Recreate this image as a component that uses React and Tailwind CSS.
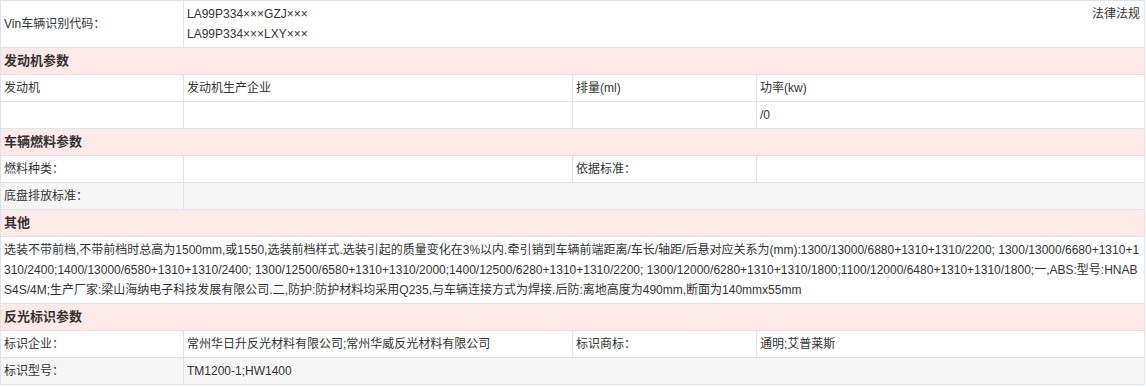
import React from "react";

const font = { fontFamily: '"Liberation Sans", Arial, "Noto Sans CJK SC", sans-serif' };

const otherText =
  "选装不带前档,不带前档时总高为1500mm,或1550,选装前档样式.选装引起的质量变化在3%以内.牵引销到车辆前端距离/车长/轴距/后悬对应关系为(mm):1300/13000/6880+1310+1310/2200; 1300/13000/6680+1310+1310/2400;1400/13000/6580+1310+1310/2400; 1300/12500/6580+1310+1310/2000;1400/12500/6280+1310+1310/2200; 1300/12000/6280+1310+1310/1800;1100/12000/6480+1310+1310/1800;一,ABS:型号:HNABS4S/4M;生产厂家:梁山海纳电子科技发展有限公司.二,防护:防护材料均采用Q235,与车辆连接方式为焊接.后防:离地高度为490mm,断面为140mmx55mm";

const Td = ({ children, colSpan, className = "" }) => (
  <td
    colSpan={colSpan}
    className={`border border-[#dfe3e8] px-[3px] py-[3px] leading-[20px] text-[12px] text-[#333] align-middle ${className}`}
  >
    {children}
  </td>
);

const Section = ({ title }) => (
  <tr className="bg-[#fdeae8]">
    <td
      colSpan={4}
      className="border border-[#dfe3e8] px-[3px] py-[3px] leading-[20px] text-[13px] font-bold text-[#333]"
    >
      {title}
    </td>
  </tr>
);

export default function App() {
  return (
    <div className="bg-white w-[1146px] h-[387px]" style={font}>
      <table className="w-[1144px] table-fixed border-collapse">
        <colgroup>
          <col className="w-[183px]" />
          <col className="w-[389px]" />
          <col className="w-[184px]" />
          <col className="w-[388px]" />
        </colgroup>
        <tbody>
          <tr>
            <Td>Vin车辆识别代码：</Td>
            <Td colSpan={3}>
              <div className="flex justify-between">
                <div>
                  <div>LA99P334×××GZJ×××</div>
                  <div>LA99P334×××LXY×××</div>
                </div>
                <div className="pr-px">法律法规</div>
              </div>
            </Td>
          </tr>

          <Section title="发动机参数" />
          <tr>
            <Td>发动机</Td>
            <Td>发动机生产企业</Td>
            <Td>排量(ml)</Td>
            <Td>功率(kw)</Td>
          </tr>
          <tr>
            <Td>&nbsp;</Td>
            <Td />
            <Td />
            <Td>/0</Td>
          </tr>

          <Section title="车辆燃料参数" />
          <tr>
            <Td>燃料种类：</Td>
            <Td />
            <Td>依据标准：</Td>
            <Td />
          </tr>
          <tr className="bg-[#f6f6f6]">
            <Td>底盘排放标准：</Td>
            <Td colSpan={3} />
          </tr>

          <Section title="其他" />
          <tr>
            <Td colSpan={4} className="break-all">
              {otherText}
            </Td>
          </tr>

          <Section title="反光标识参数" />
          <tr>
            <Td>标识企业：</Td>
            <Td>常州华日升反光材料有限公司;常州华威反光材料有限公司</Td>
            <Td>标识商标：</Td>
            <Td>通明;艾普莱斯</Td>
          </tr>
          <tr className="bg-[#f6f6f6]">
            <Td>标识型号：</Td>
            <Td colSpan={3}>TM1200-1;HW1400</Td>
          </tr>
        </tbody>
      </table>
    </div>
  );
}
